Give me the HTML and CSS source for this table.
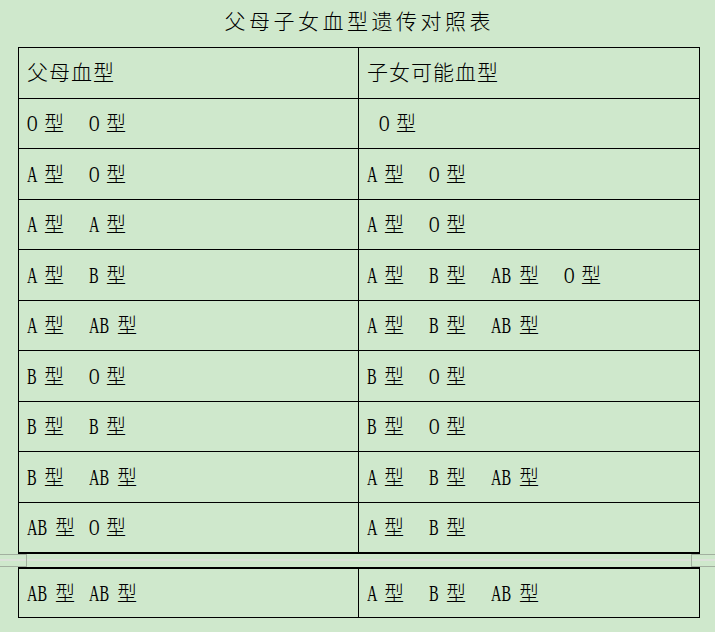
FILE: index.html
```html
<!DOCTYPE html>
<html lang="zh-CN">
<head>
<meta charset="utf-8">
<title>父母子女血型遗传对照表</title>
<link rel="stylesheet" href="styles.css">
</head>
<body>
<h1 class="title">父母子女血型遗传对照表</h1>
<div class="tbl t1">
  <div class="row hd"><div class="c">父母血型</div><div class="c">子女可能血型</div></div>
  <div class="row">
    <div class="c"><span class="bt"><span class="la">O</span>型</span><span class="bt"><span class="la">O</span>型</span></div>
    <div class="c"><span class="bt ind"><span class="la">O</span>型</span></div>
  </div>
  <div class="row">
    <div class="c"><span class="bt"><span class="la">A</span>型</span><span class="bt"><span class="la">O</span>型</span></div>
    <div class="c"><span class="bt"><span class="la">A</span>型</span><span class="bt"><span class="la">O</span>型</span></div>
  </div>
  <div class="row">
    <div class="c"><span class="bt"><span class="la">A</span>型</span><span class="bt"><span class="la">A</span>型</span></div>
    <div class="c"><span class="bt"><span class="la">A</span>型</span><span class="bt"><span class="la">O</span>型</span></div>
  </div>
  <div class="row">
    <div class="c"><span class="bt"><span class="la">A</span>型</span><span class="bt"><span class="la">B</span>型</span></div>
    <div class="c"><span class="bt"><span class="la">A</span>型</span><span class="bt"><span class="la">B</span>型</span><span class="bt"><span class="la w2">AB</span>型</span><span class="bt"><span class="la">O</span>型</span></div>
  </div>
  <div class="row">
    <div class="c"><span class="bt"><span class="la">A</span>型</span><span class="bt"><span class="la w2">AB</span>型</span></div>
    <div class="c"><span class="bt"><span class="la">A</span>型</span><span class="bt"><span class="la">B</span>型</span><span class="bt"><span class="la w2">AB</span>型</span></div>
  </div>
  <div class="row">
    <div class="c"><span class="bt"><span class="la">B</span>型</span><span class="bt"><span class="la">O</span>型</span></div>
    <div class="c"><span class="bt"><span class="la">B</span>型</span><span class="bt"><span class="la">O</span>型</span></div>
  </div>
  <div class="row">
    <div class="c"><span class="bt"><span class="la">B</span>型</span><span class="bt"><span class="la">B</span>型</span></div>
    <div class="c"><span class="bt"><span class="la">B</span>型</span><span class="bt"><span class="la">O</span>型</span></div>
  </div>
  <div class="row">
    <div class="c"><span class="bt"><span class="la">B</span>型</span><span class="bt"><span class="la w2">AB</span>型</span></div>
    <div class="c"><span class="bt"><span class="la">A</span>型</span><span class="bt"><span class="la">B</span>型</span><span class="bt"><span class="la w2">AB</span>型</span></div>
  </div>
  <div class="row">
    <div class="c s1"><span class="bt"><span class="la w2">AB</span>型</span><span class="bt"><span class="la">O</span>型</span></div>
    <div class="c"><span class="bt"><span class="la">A</span>型</span><span class="bt"><span class="la">B</span>型</span></div>
  </div>
</div>
<div class="gap"><div class="mk l"></div><div class="mk r"></div></div>
<div class="tbl t2">
  <div class="row">
    <div class="c s1"><span class="bt"><span class="la w2">AB</span>型</span><span class="bt"><span class="la w2">AB</span>型</span></div>
    <div class="c"><span class="bt"><span class="la">A</span>型</span><span class="bt"><span class="la">B</span>型</span><span class="bt"><span class="la w2">AB</span>型</span></div>
  </div>
</div>
</body>
</html>
```
FILE: styles.css
```css
html, body {
  margin: 0;
  padding: 0;
}
body {
  background: #cfe8cc;
  color: #000;
  font-family: "Noto Sans CJK SC", sans-serif;
  font-weight: 300;
  width: 715px;
  height: 632px;
  overflow: hidden;
}
.title {
  margin: 0;
  height: 47px;
  line-height: 41px;
  text-align: center;
  font-size: 21px;
  font-weight: 300;
  letter-spacing: 3.5px;
  text-indent: 3.5px;
}
.tbl {
  margin-left: 18px;
  width: 682px;
  box-sizing: border-box;
  border-left: 1px solid #000;
  border-right: 1px solid #000;
}
.t1 {
  border-bottom: 2px solid #000;
}
.t2 {
  border-top: 2px solid #000;
  border-bottom: 1px solid #000;
}
.row {
  display: grid;
  grid-template-columns: 340px 340px;
  height: 50.5px;
  box-sizing: border-box;
  border-top: 1px solid #000;
}
.t2 .row {
  border-top: 0;
  height: 48px;
}
.c {
  display: flex;
  align-items: center;
  column-gap: 25px;
  padding-left: 8px;
  font-size: 20px;
  line-height: 24px;
  white-space: nowrap;
}
.c:first-child {
  border-right: 1px solid #000;
}
.c.s1 {
  column-gap: 14px;
}
.hd .c {
  font-size: 21px;
  letter-spacing: 1px;
  padding-bottom: 3px;
}
.la {
  display: inline-block;
  width: 17px;
  font-family: "Liberation Serif", serif;
  font-weight: normal;
  font-size: 23px;
  line-height: 1;
  transform: scaleX(0.63);
  transform-origin: 0 50%;
}
.la.w2 {
  width: 28px;
}
.ind {
  margin-left: 12px;
}
.gap {
  display: flex;
  justify-content: space-between;
  height: 13px;
  background: linear-gradient(#dde2da, #dde2da) 0 5px / 100% 2px no-repeat;
}
.mk {
  box-sizing: border-box;
  border: 1px solid #a2b09f;
}
.mk.l {
  width: 27px;
  border-left: 0;
}
.mk.r {
  width: 24px;
  border-right: 0;
}
```
